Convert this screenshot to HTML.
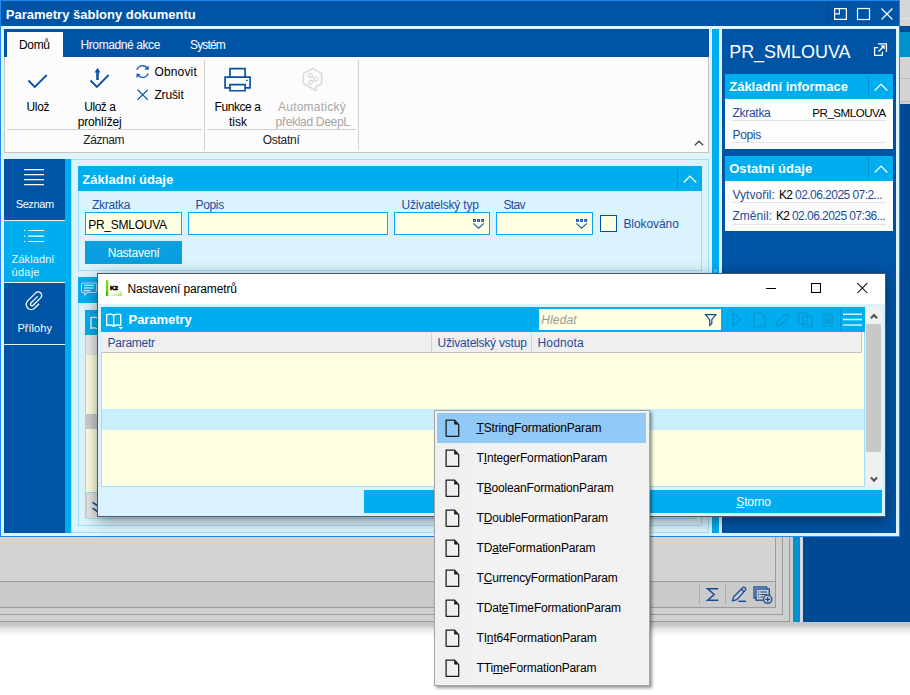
<!DOCTYPE html>
<html><head><meta charset="utf-8"><title>Parametry šablony dokumentu</title>
<style>
html,body{margin:0;padding:0;}
body{width:910px;height:695px;position:relative;overflow:hidden;background:#fff;font-family:"Liberation Sans",sans-serif;}
div,svg,span.t{position:absolute;}
span.t{white-space:nowrap;line-height:1;}
svg{overflow:visible;}
u{text-decoration:underline;text-underline-offset:1px;}
</style></head><body>
<div style="left:900px;top:0px;width:10px;height:26px;background:#d6d6d6;"></div>
<div style="left:900px;top:18px;width:10px;height:1px;background:#e6e6e6;"></div>
<div style="left:900px;top:26px;width:10px;height:6px;background:#004a94;"></div>
<div style="left:900px;top:32px;width:10px;height:25px;background:#0091cf;"></div>
<div style="left:900px;top:57px;width:10px;height:47px;background:#d4d4d4;"></div>
<div style="left:900px;top:78px;width:10px;height:1px;background:#bcbcbc;"></div>
<div style="left:900px;top:101px;width:10px;height:1px;background:#bcbcbc;"></div>
<div style="left:900px;top:104px;width:10px;height:518px;background:#004a94;"></div>
<div style="left:0px;top:537px;width:910px;height:88px;background:#d4d4d4;"></div>
<div style="left:0px;top:537px;width:790px;height:85px;background:#cfcfcf;border-right:1px solid #9b9b9b;border-bottom:1px solid #9b9b9b;box-sizing:border-box;"></div>
<div style="left:0px;top:537px;width:783px;height:78px;background:#cfcfcf;border-right:1px solid #9b9b9b;border-bottom:1px solid #9b9b9b;box-sizing:border-box;"></div>
<div style="left:0px;top:537px;width:776px;height:71px;background:#cacaca;border-right:1px solid #9b9b9b;border-bottom:1px solid #9b9b9b;box-sizing:border-box;"></div>
<div style="left:0px;top:537px;width:775px;height:44px;background:#d4d4d4;border-bottom:1px solid #9b9b9b;"></div>
<div style="left:790px;top:537px;width:3px;height:85px;background:#cdcdcd;"></div>
<div style="left:793px;top:537px;width:7px;height:85px;background:#0091cf;"></div>
<div style="left:800px;top:537px;width:3px;height:85px;background:#d8d8d8;"></div>
<div style="left:803px;top:537px;width:107px;height:85px;background:#004a94;"></div>
<div style="left:0px;top:622px;width:910px;height:3px;background:#c6c6c6;"></div>
<div style="left:0px;top:625px;width:910px;height:12px;background:linear-gradient(to bottom,rgba(0,0,0,0.22),rgba(0,0,0,0.08) 40%,rgba(0,0,0,0));"></div>
<div style="left:699px;top:584px;width:1px;height:20px;background:#aaaaaa;"></div>
<div style="left:725px;top:584px;width:1px;height:20px;background:#aaaaaa;"></div>
<svg style="left:0px;top:0px;" width="910" height="695" viewBox="0 0 910 695"><path d="M718.200 588.700H707.600L714.200 594.500L707.600 600.300H718.400" fill="none" stroke="#154a94" stroke-width="1.500" stroke-linejoin="miter"/></svg>
<svg style="left:0px;top:0px;" width="910" height="695" viewBox="0 0 910 695"><path d="M732.400 601l1.300-4.300L742.900 587.500a1.200 1.200 0 0 1 1.700 0l0.900 0.900a1.200 1.200 0 0 1 0 1.700L736.700 599.700zM741.300 589.100l2.600 2.600" fill="none" stroke="#154a94" stroke-width="1.300" stroke-linejoin="round"/><path d="M738.500 601.300H746" stroke="#154a94" stroke-width="1.400"/></svg>
<svg style="left:0px;top:0px;" width="910" height="695" viewBox="0 0 910 695"><rect x="754" y="587" width="12.600" height="11" fill="none" stroke="#154a94" stroke-width="1.300"/><rect x="756" y="589" width="13.300" height="11.200" fill="#cacaca" stroke="#154a94" stroke-width="1.300"/><path d="M758 592h1.200M760.500 592h6.500M758 594.500h1.200M760.500 594.500h6.500M758 597h1.200M760.500 597h3" stroke="#154a94" stroke-width="1"/><circle cx="767.700" cy="599.300" r="4.100" fill="#cacaca" stroke="#154a94" stroke-width="1.300"/><path d="M765.300 599.300h4.800M767.700 596.900v4.800" stroke="#154a94" stroke-width="1.300"/></svg>
<div style="left:0px;top:0px;width:900px;height:537px;background:#e0f4fd;border:1px solid #2088ee;box-sizing:border-box;"></div>
<div style="left:1px;top:1px;width:898px;height:25px;background:#0054a6;"></div>
<span class="t" style="left:5.80px;top:8px;font-size:13px;color:#fff;font-weight:bold;">Parametry šablony dokumentu</span>
<div style="left:828px;top:3px;width:1px;height:20px;background:#00468c;"></div>
<svg style="left:834px;top:8px;" width="13" height="12" viewBox="0 0 13 12"><path d="M0.6 0.600h11.800v10.800h-11.800zM0.600 5.800h4.800V0.600" fill="none" stroke="#fff" stroke-width="1.200"/></svg>
<svg style="left:857px;top:8px;" width="13" height="12" viewBox="0 0 13 12"><rect x="0.5" y="0.5" width="12" height="11" fill="none" stroke="#fff" stroke-width="1.2"/></svg>
<svg style="left:881px;top:8px;" width="12" height="12" viewBox="0 0 12 12"><path d="M0.5 0.5l11 11M11.5 0.5l-11 11" stroke="#fff" stroke-width="1.2" fill="none"/></svg>
<div style="left:4px;top:29px;width:705px;height:28px;background:#0054a6;"></div>
<div style="left:7px;top:32px;width:56px;height:25px;background:#fcfcfc;"></div>
<span class="t" style="left:19.00px;top:39px;font-size:12px;color:#000;letter-spacing:-0.352px;">Domů</span>
<span class="t" style="left:80.50px;top:39px;font-size:12px;color:#fff;letter-spacing:-0.401px;">Hromadné akce</span>
<span class="t" style="left:190.00px;top:39px;font-size:12px;color:#fff;letter-spacing:-0.835px;">Systém</span>
<div style="left:4px;top:57px;width:705px;height:96px;background:#fcfcfc;border:1px solid #c3c3c3;border-top:none;box-sizing:border-box;"></div>
<div style="left:7px;top:129px;width:195px;height:1px;background:#d0d0d0;"></div>
<div style="left:207px;top:129px;width:149px;height:1px;background:#d0d0d0;"></div>
<div style="left:204px;top:60px;width:1px;height:90px;background:#d0d0d0;"></div>
<div style="left:358px;top:60px;width:1px;height:90px;background:#d0d0d0;"></div>
<svg style="left:0px;top:0px;" width="120" height="100" viewBox="0 0 120 100"><path d="M28.4 80.5l6.4 6.4L46.7 75" fill="none" stroke="#0a50a6" stroke-width="1.8"/></svg>
<span class="t" style="left:26.40px;top:101px;font-size:12px;color:#000;letter-spacing:-0.277px;">Ulož</span>
<svg style="left:0px;top:0px;" width="120" height="100" viewBox="0 0 120 100"><path d="M90.5 80.5l6.4 6.4L108.6 75" fill="none" stroke="#0a50a6" stroke-width="1.8"/><path d="M97.5 80V71" stroke="#0a50a6" stroke-width="2.6" fill="none"/><path d="M94.6 72.4l2.9-4.6 2.9 4.600z" fill="#0a50a6"/></svg>
<span class="t" style="left:84.30px;top:101px;font-size:12px;color:#000;letter-spacing:-0.486px;">Ulož a</span>
<span class="t" style="left:77.70px;top:116px;font-size:12px;color:#000;letter-spacing:-0.173px;">prohlížej</span>
<span class="t" style="left:83.20px;top:134px;font-size:12px;color:#222;letter-spacing:-0.391px;">Záznam</span>
<svg style="left:0px;top:0px;" width="200" height="120" viewBox="0 0 200 120"><path d="M136.900 69.700A6 6 0 0 1 147.200 68M148.200 73.500A6 6 0 0 1 137.900 75.100" fill="none" stroke="#1a5cb4" stroke-width="1.250"/><path d="M148.700 65.600V70.100L144.400 69.200zM136.500 77.900V73.400L140.800 74.300z" fill="#1a5cb4"/></svg>
<span class="t" style="left:154.40px;top:66px;font-size:12px;color:#000;letter-spacing:0.163px;">Obnovit</span>
<svg style="left:0px;top:0px;" width="200" height="120" viewBox="0 0 200 120"><path d="M137.600 89.700L147.800 99.800M147.800 89.700L137.600 99.800" stroke="#1a5cb4" stroke-width="1.200" fill="none"/></svg>
<span class="t" style="left:154.40px;top:89px;font-size:12px;color:#000;letter-spacing:-0.133px;">Zrušit</span>
<svg style="left:0px;top:0px;" width="300" height="120" viewBox="0 0 300 120"><path d="M230 77V68.650H245.100V77M230 87.850H225.050V77.050H250.050V87.850H245.100M230 84.650H245.100V90.750H230z" fill="none" stroke="#0a50a6" stroke-width="1.700"/><rect x="246" y="79.800" width="1.700" height="1.300" fill="#0a50a6"/></svg>
<span class="t" style="left:214.50px;top:101px;font-size:12px;color:#000;letter-spacing:-0.420px;">Funkce a</span>
<span class="t" style="left:229.00px;top:116px;font-size:12px;color:#000;">tisk</span>
<svg style="left:0px;top:0px;" width="400" height="120" viewBox="0 0 400 120"><path d="M312.500 68.400L321.600 73.600V83.500L315.800 86.800V90.500L303.400 83.500V73.600z" fill="none" stroke="#dadada" stroke-width="1.600" stroke-linejoin="round"/><circle cx="310.400" cy="75.300" r="1.900" fill="none" stroke="#dadada" stroke-width="1.200"/><circle cx="316" cy="78.900" r="1.900" fill="none" stroke="#dadada" stroke-width="1.200"/><circle cx="310.400" cy="82.300" r="1.900" fill="none" stroke="#dadada" stroke-width="1.200"/><path d="M312 76.300l2.400 1.600M314.400 79.900l-2.400 1.500" stroke="#dadada" stroke-width="1.200"/></svg>
<span class="t" style="left:278.00px;top:101px;font-size:12px;color:#aaa4a4;letter-spacing:0.231px;">Automatický</span>
<span class="t" style="left:275.60px;top:116px;font-size:12px;color:#aaa4a4;letter-spacing:-0.304px;">překlad DeepL</span>
<span class="t" style="left:262.70px;top:134px;font-size:12px;color:#222;letter-spacing:-0.255px;">Ostatní</span>
<svg style="left:694px;top:140px;" width="10" height="6" viewBox="0 0 10 6"><path d="M0.8 5.2L5 1.2l4.2 4" fill="none" stroke="#444" stroke-width="1.3"/></svg>
<div style="left:712px;top:29px;width:7px;height:504px;background:#00adee;"></div>
<div style="left:722px;top:29px;width:174px;height:504px;background:#0054a6;"></div>
<svg style="left:0px;top:0px;" width="900" height="400" viewBox="0 0 900 400"><circle cx="715.500" cy="270.700" r="1.800" fill="rgba(255,255,255,0.28)"/></svg>
<div style="left:4px;top:159px;width:61px;height:374px;background:#0054a6;"></div>
<div style="left:65px;top:159px;width:6px;height:374px;background:#00adee;"></div>
<div style="left:4px;top:220px;width:61px;height:1px;background:#e4f6fe;"></div>
<div style="left:4px;top:221px;width:67px;height:61px;background:#00adee;"></div>
<div style="left:4px;top:282px;width:61px;height:1px;background:#e4f6fe;"></div>
<div style="left:4px;top:344px;width:61px;height:1px;background:#e4f6fe;"></div>
<svg style="left:0px;top:0px;" width="100" height="400" viewBox="0 0 100 400"><path d="M24 169.650H44M24 174.650H44M24 179.650H44M24 184.650H44" stroke="#fff" stroke-width="1.300"/></svg>
<span class="t" style="left:15.70px;top:199px;font-size:11px;color:#fff;letter-spacing:-0.392px;">Seznam</span>
<svg style="left:0px;top:0px;" width="100" height="400" viewBox="0 0 100 400"><path d="M28 230.500H44M24 230.500H25.200M28 236.100H44M24 236.100H25.200M28 241.500H44M24 241.500H25.200" stroke="#fff" stroke-width="1.100"/></svg>
<span class="t" style="left:11.60px;top:254px;font-size:11px;color:#e9f8ff;letter-spacing:0.089px;">Základní</span>
<span class="t" style="left:11.60px;top:267px;font-size:11px;color:#e9f8ff;letter-spacing:0.237px;">údaje</span>
<svg style="left:0px;top:0px;" width="100" height="400" viewBox="0 0 100 400"><path d="M39.17 303.72L34.83 308.06L34.83 308.06L33.94 308.77L32.93 309.26L31.82 309.51L30.69 309.51L29.59 309.26L28.57 308.77L27.69 308.06L26.98 307.18L26.49 306.16L26.24 305.06L26.24 303.93L26.49 302.82L26.98 301.80L27.69 300.92L27.69 300.92L35.71 292.89L35.71 292.89L36.33 292.41L37.03 292.07L37.80 291.89L38.58 291.89L39.34 292.07L40.05 292.41L40.66 292.89L41.15 293.51L41.49 294.21L41.67 294.98L41.67 295.76L41.49 296.53L41.15 297.23L40.66 297.84L40.66 297.84L33.20 305.30L33.20 305.30L32.68 305.65L32.07 305.77L31.46 305.65L30.94 305.30L30.59 304.78L30.47 304.17L30.59 303.56L30.94 303.04L30.94 303.04L37.63 296.35" fill="none" stroke="#fff" stroke-width="1.250" stroke-linejoin="round"/></svg>
<span class="t" style="left:17.40px;top:323px;font-size:11px;color:#fff;letter-spacing:0.052px;">Přílohy</span>
<div style="left:71px;top:159px;width:638px;height:374px;background:#dbf3fd;border:1px solid #9ddffb;box-sizing:border-box;"></div>
<div style="left:78px;top:166px;width:624px;height:105px;background:#dbf3fd;border:1px solid #9ddffb;box-sizing:border-box;"></div>
<div style="left:78px;top:166px;width:624px;height:25px;background:#00adee;"></div>
<span class="t" style="left:82.30px;top:173px;font-size:13px;color:#fff;font-weight:bold;letter-spacing:0.043px;">Základní údaje</span>
<div style="left:677px;top:168px;width:1px;height:21px;background:#0090cc;"></div>
<svg style="left:682.5px;top:174.5px;" width="15" height="9" viewBox="0 0 15 9"><path d="M0.700 7.500L7 1.100l6.300 6.400" fill="none" stroke="#fff" stroke-width="1.300"/></svg>
<span class="t" style="left:92.00px;top:199px;font-size:12px;color:#1f4b9c;letter-spacing:-0.244px;">Zkratka</span>
<span class="t" style="left:195.50px;top:199px;font-size:12px;color:#1f4b9c;letter-spacing:-0.344px;">Popis</span>
<span class="t" style="left:401.60px;top:199px;font-size:12px;color:#1f4b9c;letter-spacing:-0.195px;">Uživatelský typ</span>
<span class="t" style="left:503.40px;top:199px;font-size:12px;color:#1f4b9c;letter-spacing:-0.653px;">Stav</span>
<div style="left:85px;top:212px;width:97px;height:23px;background:#ffffe1;border:1px solid #0ea5f0;box-sizing:border-box;"></div>
<div style="left:188px;top:212px;width:200px;height:23px;background:#ffffe1;border:1px solid #0ea5f0;box-sizing:border-box;"></div>
<div style="left:394px;top:212px;width:96px;height:23px;background:#ffffe1;border:1px solid #0ea5f0;box-sizing:border-box;"></div>
<div style="left:496px;top:212px;width:97px;height:23px;background:#ffffe1;border:1px solid #0ea5f0;box-sizing:border-box;"></div>
<span class="t" style="left:88.20px;top:219px;font-size:12px;color:#000;letter-spacing:-0.254px;">PR_SMLOUVA</span>
<svg style="left:473.4px;top:218.9px;" width="12" height="11" viewBox="0 0 12 11"><rect x="0.0" y="0" width="2.900" height="2.900" fill="#1758ad"/><rect x="1.0" y="1" width="0.900" height="0.900" fill="#6f9ad6"/><rect x="4.1" y="0" width="2.900" height="2.900" fill="#1758ad"/><rect x="5.1" y="1" width="0.900" height="0.900" fill="#6f9ad6"/><rect x="8.2" y="0" width="2.900" height="2.900" fill="#1758ad"/><rect x="9.2" y="1" width="0.900" height="0.900" fill="#6f9ad6"/><path d="M0.300 4.400l5.300 4.700 5.300-4.700" fill="none" stroke="#1758ad" stroke-width="1.200"/></svg>
<svg style="left:575.9px;top:218.9px;" width="12" height="11" viewBox="0 0 12 11"><rect x="0.0" y="0" width="2.900" height="2.900" fill="#1758ad"/><rect x="1.0" y="1" width="0.900" height="0.900" fill="#6f9ad6"/><rect x="4.1" y="0" width="2.900" height="2.900" fill="#1758ad"/><rect x="5.1" y="1" width="0.900" height="0.900" fill="#6f9ad6"/><rect x="8.2" y="0" width="2.900" height="2.900" fill="#1758ad"/><rect x="9.2" y="1" width="0.900" height="0.900" fill="#6f9ad6"/><path d="M0.300 4.400l5.300 4.700 5.300-4.700" fill="none" stroke="#1758ad" stroke-width="1.200"/></svg>
<div style="left:600px;top:215px;width:17px;height:17px;background:#ffffe1;border:1px solid #0054a6;box-sizing:border-box;"></div>
<span class="t" style="left:623.40px;top:218px;font-size:12px;color:#1f4b9c;letter-spacing:-0.071px;">Blokováno</span>
<div style="left:85px;top:241px;width:97px;height:23px;background:#0c9fe0;"></div>
<span class="t" style="left:107.70px;top:247px;font-size:12px;color:#fff;letter-spacing:-0.225px;">Nastavení</span>
<div style="left:78px;top:277px;width:624px;height:249px;background:#dbf3fd;border:1px solid #9ddffb;box-sizing:border-box;"></div>
<div style="left:78px;top:277px;width:624px;height:26px;background:#00adee;"></div>
<svg style="left:0px;top:0px;" width="200" height="400" viewBox="0 0 200 400"><path d="M83 283h12a1.500 1.500 0 0 1 1.500 1.500v6.500a1.500 1.500 0 0 1-1.500 1.500H87.500l-2.800 2.600v-2.600H83a1.500 1.500 0 0 1-1.500-1.500v-6.500a1.500 1.500 0 0 1 1.500-1.500z" fill="none" stroke="#a5e1fa" stroke-width="1.200"/><path d="M84 285.300h10M84 288h10M84 290.700h6.700" stroke="#fff" stroke-width="1.100"/></svg>
<div style="left:85px;top:310px;width:611px;height:209px;background:#dbf3fd;border:1px solid #9ddffb;box-sizing:border-box;"></div>
<div style="left:85px;top:310px;width:20px;height:25px;background:#00adee;"></div>
<div style="left:86px;top:335px;width:15px;height:20px;background:#e9e9e9;"></div>
<div style="left:86px;top:355px;width:15px;height:137px;background:#ffffe1;"></div>
<div style="left:86px;top:492px;width:15px;height:26px;background:#e6e6e6;"></div>
<div style="left:86px;top:414px;width:15px;height:15px;background:#cdcdcd;"></div>
<svg style="left:0px;top:0px;" width="200" height="400" viewBox="0 0 200 400"><path d="M98 318.200C95.800 317.100 93.300 317 91 317.700V328.200C93.300 327.600 95.800 327.800 98 329" fill="none" stroke="#e6f7fe" stroke-width="1.400"/></svg>
<svg style="left:0px;top:0px;" width="200" height="600" viewBox="0 0 200 600"><path d="M92.500 502.300L98.500 506.300L104.500 502.300M92.500 508.200L98.500 512.200L104.500 508.200" fill="none" stroke="#0c4da2" stroke-width="1.600"/></svg>
<div style="left:86px;top:492px;width:15px;height:1px;background:#9ddffb;"></div>
<div style="left:86px;top:493px;width:1px;height:25px;background:#d4d0d0;"></div>
<span class="t" style="left:729.20px;top:43px;font-size:18px;color:#fff;letter-spacing:-0.040px;">PR_SMLOUVA</span>
<svg style="left:0px;top:0px;" width="900" height="100" viewBox="0 0 900 100"><path d="M878.2 47.600H874.600V55.400H882.400V51.800M878 43.900H886.400V52" fill="none" stroke="#fff" stroke-width="1.300"/><path d="M878.500 51.500L883.300 46.700" stroke="#fff" stroke-width="1.300"/><path d="M884.800 45.200l-0.300 4.400-4.100-4.100z" fill="#fff"/></svg>
<div style="left:725px;top:74px;width:168px;height:25px;background:#00adee;"></div>
<span class="t" style="left:729.20px;top:80px;font-size:13px;color:#fff;font-weight:bold;letter-spacing:0.012px;">Základní informace</span>
<div style="left:868px;top:76px;width:1px;height:21px;background:#0090cc;"></div>
<svg style="left:873.7px;top:82.5px;" width="15" height="9" viewBox="0 0 15 9"><path d="M0.700 7.500L7 1.100l6.300 6.400" fill="none" stroke="#fff" stroke-width="1.300"/></svg>
<div style="left:725px;top:99px;width:168px;height:50px;background:#fdfdfd;"></div>
<span class="t" style="left:732.50px;top:107px;font-size:12px;color:#1f4b9c;letter-spacing:-0.287px;">Zkratka</span>
<span class="t" style="left:812.30px;top:108px;font-size:11.5px;color:#000;letter-spacing:-0.435px;">PR_SMLOUVA</span>
<div style="left:732px;top:120px;width:154px;height:1px;background:#e3e3e3;"></div>
<span class="t" style="left:732.50px;top:129px;font-size:12px;color:#1f4b9c;letter-spacing:-0.344px;">Popis</span>
<div style="left:732px;top:142px;width:154px;height:1px;background:#e3e3e3;"></div>
<div style="left:725px;top:156px;width:168px;height:25px;background:#00adee;"></div>
<span class="t" style="left:729.20px;top:162px;font-size:13px;color:#fff;font-weight:bold;letter-spacing:0.058px;">Ostatní údaje</span>
<div style="left:868px;top:158px;width:1px;height:21px;background:#0090cc;"></div>
<svg style="left:873.7px;top:164.5px;" width="15" height="9" viewBox="0 0 15 9"><path d="M0.700 7.500L7 1.100l6.300 6.400" fill="none" stroke="#fff" stroke-width="1.300"/></svg>
<div style="left:725px;top:181px;width:168px;height:50px;background:#fdfdfd;"></div>
<span class="t" style="left:732.50px;top:189px;font-size:12px;color:#1f4b9c;letter-spacing:0.019px;">Vytvořil:</span>
<span class="t" style="left:779.00px;top:189px;font-size:12px;color:#000;letter-spacing:-0.839px;">K2</span>
<span class="t" style="left:795.00px;top:189px;font-size:12px;color:#1f4b9c;letter-spacing:-0.542px;">02.06.2025 07:2...</span>
<div style="left:732px;top:202px;width:154px;height:1px;background:#e3e3e3;"></div>
<span class="t" style="left:732.50px;top:210px;font-size:12px;color:#1f4b9c;letter-spacing:0.023px;">Změnil:</span>
<span class="t" style="left:776.00px;top:210px;font-size:12px;color:#000;letter-spacing:-0.839px;">K2</span>
<span class="t" style="left:792.00px;top:210px;font-size:12px;color:#1f4b9c;letter-spacing:-0.549px;">02.06.2025 07:36...</span>
<div style="left:732px;top:224px;width:154px;height:1px;background:#e3e3e3;"></div>
<div style="left:97px;top:273px;width:789px;height:244px;background:#daf2fd;border:1px solid rgba(20,25,35,0.72);box-sizing:border-box;box-shadow:0 4px 14px rgba(0,0,0,0.42);"></div>
<div style="left:98px;top:274px;width:787px;height:30px;background:#fff;"></div>
<svg style="left:0px;top:0px;" width="200" height="400" viewBox="0 0 200 400"><defs><linearGradient id="kg" x1="0" y1="0" x2="0" y2="1"><stop offset="0" stop-color="#8fe01e"/><stop offset="1" stop-color="#3fc00c"/></linearGradient><linearGradient id="kw" x1="0.300" y1="0.200" x2="0.650" y2="1"><stop offset="0.550" stop-color="#ffffff"/><stop offset="0.800" stop-color="#e8f8cc"/><stop offset="1" stop-color="#b6e962"/></linearGradient></defs><rect x="108" y="283" width="14" height="13" fill="url(#kw)"/><rect x="106" y="280" width="2.300" height="16" fill="url(#kg)"/><text x="110" y="289.800" font-family="Liberation Sans" font-weight="bold" font-size="5.800" fill="#000" stroke="#000" stroke-width="0.500" textLength="8" lengthAdjust="spacingAndGlyphs">K2</text></svg>
<span class="t" style="left:127.50px;top:283px;font-size:12px;color:#000;letter-spacing:-0.145px;">Nastavení parametrů</span>
<svg style="left:766px;top:283px;" width="11" height="11" viewBox="0 0 11 11"><path d="M0 5.500h10" stroke="#000" stroke-width="1"/></svg>
<svg style="left:811px;top:283px;" width="11" height="11" viewBox="0 0 11 11"><rect x="0.500" y="0.500" width="9" height="9" fill="none" stroke="#000" stroke-width="1"/></svg>
<svg style="left:857px;top:283px;" width="11" height="11" viewBox="0 0 11 11"><path d="M0.400 0.200l9.800 9.800M10.200 0.200L0.400 10" stroke="#000" stroke-width="1.050" fill="none"/></svg>
<div style="left:101px;top:307px;width:764px;height:25px;background:#00adee;"></div>
<svg style="left:0px;top:0px;" width="200" height="400" viewBox="0 0 200 400"><path d="M113.700 315.200C111.500 314 109 313.900 106.700 314.600V325.400C109 324.800 111.500 325 113.700 326.200zM113.700 315.200C115.900 314 118.400 313.900 120.700 314.600V325.400C118.400 324.800 115.900 325 113.700 326.200z" fill="none" stroke="#fff" stroke-width="1.400" stroke-linejoin="round"/><path d="M118.400 327.100h4.600l-2.300 2.400z" fill="#fff"/></svg>
<span class="t" style="left:128.60px;top:313px;font-size:13px;color:#fff;font-weight:bold;letter-spacing:-0.066px;">Parametry</span>
<div style="left:539px;top:309px;width:182px;height:21px;background:#ffffe1;"></div>
<span class="t" style="left:541.30px;top:314px;font-size:12px;color:#9a9a9a;font-style:italic;letter-spacing:0.119px;">Hledat</span>
<svg style="left:0px;top:0px;" width="900" height="400" viewBox="0 0 900 400"><path d="M705.600 314.600H715.800L711.800 319.600V323.400L709.700 325.400V319.600z" fill="none" stroke="#0c4da2" stroke-width="1.200" stroke-linejoin="miter"/></svg>
<svg style="left:732px;top:312px;" width="11" height="16" viewBox="0 0 11 16"><path d="M1 1.500l8.500 6L1 13.500z" fill="none" stroke="#0996d4" stroke-width="1.200"/></svg>
<svg style="left:753px;top:312px;" width="13" height="16" viewBox="0 0 13 16"><path d="M1 0.800h7l4 4V15H1z" fill="none" stroke="#0996d4" stroke-width="1.200"/></svg>
<svg style="left:775px;top:312px;" width="15" height="16" viewBox="0 0 15 16"><path d="M1 14.500l1-4L11 1.500l3 3L5 13.500z" fill="none" stroke="#0996d4" stroke-width="1.200"/></svg>
<svg style="left:798px;top:312px;" width="15" height="16" viewBox="0 0 15 16"><path d="M0.800 0.800h8v11h-8zM5 4h9v11h-9z" fill="none" stroke="#0996d4" stroke-width="1.200"/></svg>
<svg style="left:822px;top:312px;" width="13" height="16" viewBox="0 0 13 16"><path d="M0.800 3.500h11M4 3.500V1.500h4.500v2M2 3.500v11h8.500v-11M4.500 6v6M6.300 6v6M8.100 6v6" fill="none" stroke="#0996d4" stroke-width="1.100"/></svg>
<div style="left:840px;top:309px;width:1px;height:21px;background:#0090cc;"></div>
<svg style="left:0px;top:0px;" width="900" height="400" viewBox="0 0 900 400"><path d="M843 314.200H862M843 325H862" stroke="#d4f1fd" stroke-width="1.500"/><path d="M843 319.500H862" stroke="#fff" stroke-width="1.500"/></svg>
<div style="left:101px;top:332px;width:761px;height:21px;background:#efefef;border-bottom:1px solid #c4c4c4;border-right:1px solid #c4c4c4;box-sizing:border-box;"></div>
<div style="left:431px;top:333px;width:1px;height:19px;background:#cfcfcf;"></div>
<div style="left:531px;top:333px;width:1px;height:19px;background:#cfcfcf;"></div>
<span class="t" style="left:107.50px;top:337px;font-size:12px;color:#1f4b9c;letter-spacing:-0.256px;">Parametr</span>
<span class="t" style="left:437.60px;top:337px;font-size:12px;color:#1f4b9c;letter-spacing:-0.217px;">Uživatelský vstup</span>
<span class="t" style="left:537.60px;top:337px;font-size:12px;color:#1f4b9c;letter-spacing:0.104px;">Hodnota</span>
<div style="left:862px;top:332px;width:2px;height:21px;background:#ffffe1;"></div>
<div style="left:864px;top:332px;width:1px;height:21px;background:#9ddffb;"></div>
<div style="left:101px;top:353px;width:764px;height:134px;background:#ffffe1;border:1px solid #9ddffb;border-top:none;box-sizing:border-box;"></div>
<div style="left:102px;top:409px;width:762px;height:21px;background:#c9effc;"></div>
<div style="left:866px;top:307px;width:16px;height:180px;background:#f0f0f0;"></div>
<div style="left:866px;top:324px;width:15px;height:128px;background:#c8c8c8;"></div>
<svg style="left:869.5px;top:313px;" width="9" height="7" viewBox="0 0 9 7"><path d="M0.900 5.300L4 2l3.100 3.300" fill="none" stroke="#505050" stroke-width="2.100"/></svg>
<svg style="left:869.5px;top:475.5px;" width="9" height="7" viewBox="0 0 9 7"><path d="M0.900 1.400L4 4.700l3.100-3.300" fill="none" stroke="#505050" stroke-width="2.100"/></svg>
<div style="left:364px;top:490px;width:258px;height:23px;background:#00adee;"></div>
<div style="left:625px;top:490px;width:257px;height:23px;background:#00adee;"></div>
<span class="t" style="left:736.30px;top:496px;font-size:12px;color:#fff;letter-spacing:-0.143px;"><u>S</u>torno</span>
<div style="left:434px;top:410px;width:216px;height:276px;background:#f2f2f2;border:1px solid #a6a6a6;box-sizing:border-box;box-shadow:2px 2px 3px rgba(0,0,0,0.42);"></div>
<div style="left:435px;top:411px;width:38px;height:274px;background:#f0f0f0;"></div>
<div style="left:437px;top:413px;width:209px;height:30px;background:#91c9f7;"></div>
<svg style="left:445px;top:419px;" width="15" height="19" viewBox="0 0 15 19"><path d="M1.100 1h8.300l4.300 4.600V17.300H1.100z" fill="none" stroke="#1c1c1c" stroke-width="1.250" stroke-linejoin="round"/><path d="M9.200 1.300v4.300h4.100z" fill="#1c1c1c"/></svg>
<span class="t" style="left:476.5px;top:422px;font-size:12px;color:#000;letter-spacing:-0.154px"><u>T</u>StringFormationParam</span>
<svg style="left:445px;top:449px;" width="15" height="19" viewBox="0 0 15 19"><path d="M1.100 1h8.300l4.300 4.600V17.300H1.100z" fill="none" stroke="#1c1c1c" stroke-width="1.250" stroke-linejoin="round"/><path d="M9.200 1.300v4.300h4.100z" fill="#1c1c1c"/></svg>
<span class="t" style="left:476.5px;top:452px;font-size:12px;color:#000;letter-spacing:-0.158px">T<u>I</u>ntegerFormationParam</span>
<svg style="left:445px;top:479px;" width="15" height="19" viewBox="0 0 15 19"><path d="M1.100 1h8.300l4.300 4.600V17.300H1.100z" fill="none" stroke="#1c1c1c" stroke-width="1.250" stroke-linejoin="round"/><path d="M9.200 1.300v4.300h4.100z" fill="#1c1c1c"/></svg>
<span class="t" style="left:476.5px;top:482px;font-size:12px;color:#000;letter-spacing:-0.166px">T<u>B</u>ooleanFormationParam</span>
<svg style="left:445px;top:509px;" width="15" height="19" viewBox="0 0 15 19"><path d="M1.100 1h8.300l4.300 4.600V17.300H1.100z" fill="none" stroke="#1c1c1c" stroke-width="1.250" stroke-linejoin="round"/><path d="M9.200 1.300v4.300h4.100z" fill="#1c1c1c"/></svg>
<span class="t" style="left:476.5px;top:512px;font-size:12px;color:#000;letter-spacing:-0.167px">T<u>D</u>oubleFormationParam</span>
<svg style="left:445px;top:539px;" width="15" height="19" viewBox="0 0 15 19"><path d="M1.100 1h8.300l4.300 4.600V17.300H1.100z" fill="none" stroke="#1c1c1c" stroke-width="1.250" stroke-linejoin="round"/><path d="M9.200 1.300v4.300h4.100z" fill="#1c1c1c"/></svg>
<span class="t" style="left:476.5px;top:542px;font-size:12px;color:#000;letter-spacing:-0.167px">TD<u>a</u>teFormationParam</span>
<svg style="left:445px;top:569px;" width="15" height="19" viewBox="0 0 15 19"><path d="M1.100 1h8.300l4.300 4.600V17.300H1.100z" fill="none" stroke="#1c1c1c" stroke-width="1.250" stroke-linejoin="round"/><path d="M9.200 1.300v4.300h4.100z" fill="#1c1c1c"/></svg>
<span class="t" style="left:476.5px;top:572px;font-size:12px;color:#000;letter-spacing:-0.186px">T<u>C</u>urrencyFormationParam</span>
<svg style="left:445px;top:599px;" width="15" height="19" viewBox="0 0 15 19"><path d="M1.100 1h8.300l4.300 4.600V17.300H1.100z" fill="none" stroke="#1c1c1c" stroke-width="1.250" stroke-linejoin="round"/><path d="M9.200 1.300v4.300h4.100z" fill="#1c1c1c"/></svg>
<span class="t" style="left:476.5px;top:602px;font-size:12px;color:#000;letter-spacing:-0.172px">TDat<u>e</u>TimeFormationParam</span>
<svg style="left:445px;top:629px;" width="15" height="19" viewBox="0 0 15 19"><path d="M1.100 1h8.300l4.300 4.600V17.300H1.100z" fill="none" stroke="#1c1c1c" stroke-width="1.250" stroke-linejoin="round"/><path d="M9.200 1.300v4.300h4.100z" fill="#1c1c1c"/></svg>
<span class="t" style="left:476.5px;top:632px;font-size:12px;color:#000;letter-spacing:-0.160px">TI<u>n</u>t64FormationParam</span>
<svg style="left:445px;top:659px;" width="15" height="19" viewBox="0 0 15 19"><path d="M1.100 1h8.300l4.300 4.600V17.300H1.100z" fill="none" stroke="#1c1c1c" stroke-width="1.250" stroke-linejoin="round"/><path d="M9.200 1.300v4.300h4.100z" fill="#1c1c1c"/></svg>
<span class="t" style="left:476.5px;top:662px;font-size:12px;color:#000;letter-spacing:-0.168px">TTi<u>m</u>eFormationParam</span>
</body></html>
